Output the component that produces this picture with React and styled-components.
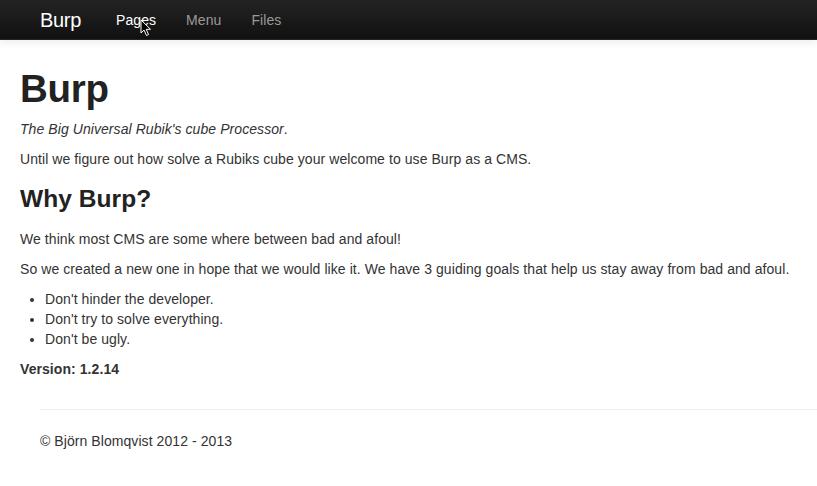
import React from 'react';
import styled, { createGlobalStyle } from 'styled-components';

const GlobalStyle = createGlobalStyle`
  html, body {
    margin: 0;
    padding: 0;
    background: #fff;
    overflow: hidden;
  }
  body {
    font-family: "Liberation Sans", Arial, Helvetica, sans-serif;
    font-size: 14px;
    line-height: 20px;
    color: #333;
    letter-spacing: 0.07px;
  }
`;

const Navbar = styled.div`
  height: 39px;
  background: linear-gradient(to bottom, #232323, #111);
  border-bottom: 1px solid #252525;
  box-shadow: 0 1px 10px rgba(0, 0, 0, 0.1);
  display: flex;
  align-items: center;
  padding-left: 40px;
`;

const Brand = styled.a`
  font-size: 20px;
  line-height: 20px;
  color: #fff;
  padding: 10px 20px 9px 0;
  text-decoration: none;
  letter-spacing: -0.3px;
`;

const Nav = styled.ul`
  display: flex;
  list-style: none;
  margin: 0;
  padding: 0;
`;

const NavItem = styled.li`
  position: relative;
`;

const NavLink = styled.a`
  display: block;
  padding: 10px 15px 9px;
  color: ${p => (p.$active ? '#fff' : '#999')};
  text-decoration: none;
`;

const Cursor = styled.svg`
  position: absolute;
  left: 39px;
  top: 19px;
`;

const Main = styled.div`
  padding: 19px 20px 0;
`;

const Title = styled.h1`
  font-size: 38.5px;
  line-height: 40px;
  margin: 10px 0;
  color: #222;
  font-weight: bold;
  letter-spacing: -0.3px;
`;

const SubTitle = styled.h3`
  font-size: 24.5px;
  line-height: 40px;
  margin: 10px 0;
  color: #222;
  font-weight: bold;
`;

const Text = styled.p`
  margin: 0 0 10px;
`;

const List = styled.ul`
  margin: 0 0 10px 25px;
  padding: 0;
`;

const Footer = styled.footer`
  margin-left: 40px;
`;

const Rule = styled.hr`
  margin: 30px 0 20px;
  border: 0;
  border-top: 1px solid #eee;
  border-bottom: 1px solid #fff;
`;

export default function App() {
  return (
    <>
      <GlobalStyle />
      <Navbar>
        <Brand href="#">Burp</Brand>
        <Nav>
          <NavItem>
            <NavLink href="#" $active>Pages</NavLink>
            <Cursor width="12" height="18" viewBox="0 0 12 18">
              <path d="M1 1 L1 14 L4 11 L6.5 16.5 L8.5 15.6 L6.2 10.3 L10.5 10.3 Z" fill="#000" stroke="#fff" strokeWidth="1" />
            </Cursor>
          </NavItem>
          <NavItem><NavLink href="#">Menu</NavLink></NavItem>
          <NavItem><NavLink href="#">Files</NavLink></NavItem>
        </Nav>
      </Navbar>
      <Main>
        <Title>Burp</Title>
        <Text><em>The Big Universal Rubik's cube Processor</em>.</Text>
        <Text>Until we figure out how solve a Rubiks cube your welcome to use Burp as a CMS.</Text>
        <SubTitle>Why Burp?</SubTitle>
        <Text>We think most CMS are some where between bad and afoul!</Text>
        <Text>So we created a new one in hope that we would like it. We have 3 guiding goals that help us stay away from bad and afoul.</Text>
        <List>
          <li>Don't hinder the developer.</li>
          <li>Don't try to solve everything.</li>
          <li>Don't be ugly.</li>
        </List>
        <Text><strong>Version: 1.2.14</strong></Text>
      </Main>
      <Footer>
        <Rule />
        <Text>© Björn Blomqvist 2012 - 2013</Text>
      </Footer>
    </>
  );
}
